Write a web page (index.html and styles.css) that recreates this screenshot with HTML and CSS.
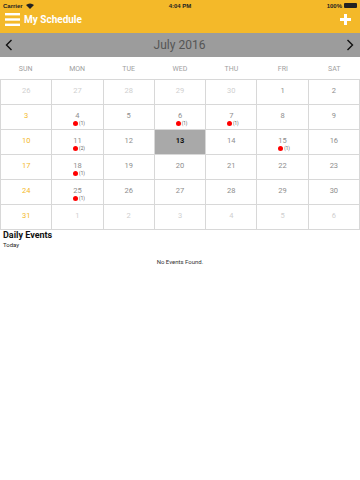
FILE: index.html
```html
<!DOCTYPE html>
<html>
<head>
  <title>My Schedule</title>
  <link rel="stylesheet" href="styles.css">
</head>
<body>
  <div class="status-bar">
    <div class="carrier">Carrier
      <svg width="8" height="6" viewBox="0 0 8 6"><path d="M4 6 L0 2 A6 6 0 0 1 8 2 Z" fill="#222"/></svg>
    </div>
    <div class="time">4:04 PM</div>
    <div class="battery">100% <span class="batt"></span></div>
  </div>

  <div class="nav-bar">
    <div class="nav-left">
      <svg class="menu-icon" width="15" height="13" viewBox="0 0 15 13">
        <rect x="0" y="0" width="15" height="2.4" fill="#fff"/>
        <rect x="0" y="5.3" width="15" height="2.4" fill="#fff"/>
        <rect x="0" y="10.6" width="15" height="2.4" fill="#fff"/>
      </svg>
      <span class="nav-title">My Schedule</span>
    </div>
    <svg class="plus-icon" width="11" height="11" viewBox="0 0 11 11">
      <rect x="4" y="0" width="3" height="11" fill="#fff"/>
      <rect x="0" y="4" width="11" height="3" fill="#fff"/>
    </svg>
  </div>

  <div class="month-bar">
    <svg width="8" height="12" viewBox="0 0 8 12"><path d="M6.5 1 L1.5 6 L6.5 11" fill="none" stroke="#111" stroke-width="1.4"/></svg>
    <span class="month-title">July 2016</span>
    <svg width="8" height="12" viewBox="0 0 8 12"><path d="M1.5 1 L6.5 6 L1.5 11" fill="none" stroke="#111" stroke-width="1.4"/></svg>
  </div>

  <div class="weekdays">
    <span>SUN</span><span>MON</span><span>TUE</span><span>WED</span><span>THU</span><span>FRI</span><span>SAT</span>
  </div>

  <div class="calendar" id="calendar"></div>

  <div class="daily">
    <div class="daily-title">Daily Events</div>
    <div class="daily-sub">Today</div>
    <div class="no-events">No Events Found.</div>
  </div>

  <script>
    // weeks of July 2016, [day, inMonth, eventCount]
    const weeks = [
      [[26,0],[27,0],[28,0],[29,0],[30,0],[1,1],[2,1]],
      [[3,1],[4,1,1],[5,1],[6,1,1],[7,1,1],[8,1],[9,1]],
      [[10,1],[11,1,2],[12,1],[13,1],[14,1],[15,1,1],[16,1]],
      [[17,1],[18,1,1],[19,1],[20,1],[21,1],[22,1],[23,1]],
      [[24,1],[25,1,1],[26,1],[27,1],[28,1],[29,1],[30,1]],
      [[31,1],[1,0],[2,0],[3,0],[4,0],[5,0],[6,0]]
    ];
    const cal = document.getElementById('calendar');
    weeks.forEach(week => {
      week.forEach((d, i) => {
        const cell = document.createElement('div');
        cell.className = 'cell';
        if (!d[1]) cell.classList.add('other');
        else if (i === 0) cell.classList.add('sunday');
        if (d[1] && d[0] === 13) cell.classList.add('today');
        let html = '<span class="num">' + d[0] + '</span>';
        if (d[2]) {
          html += '<span class="event"><span class="dot"></span>(' + d[2] + ')</span>';
        }
        cell.innerHTML = html;
        cal.appendChild(cell);
      });
    });
  </script>
</body>
</html>
```

FILE: styles.css
```css
body {
  margin: 0;
  font-family: Roboto, "Liberation Sans", sans-serif;
  background: #fff;
  width: 360px;
}
.status-bar {
  height: 11px;
  background: #f4b929;
  display: flex;
  align-items: center;
  justify-content: space-between;
  padding: 0 3px;
  font-family: "Liberation Sans", sans-serif;
  font-size: 6px;
  font-weight: bold;
  color: #222;
  position: relative;
}
.carrier {
  display: flex;
  align-items: center;
  gap: 3px;
}
.time {
  position: absolute;
  left: 0;
  right: 0;
  text-align: center;
}
.battery {
  display: flex;
  align-items: center;
  gap: 1px;
}
.batt {
  width: 13px;
  height: 5px;
  background: #222;
  border-radius: 1px;
  margin-left: 1px;
}
.nav-bar {
  height: 22px;
  background: #f4b929;
  display: flex;
  align-items: center;
  justify-content: space-between;
  padding: 0 9px 5px 5px;
  box-sizing: border-box;
}
.nav-left {
  display: flex;
  align-items: center;
  gap: 4px;
}
.nav-title {
  color: #fff;
  font-size: 10px;
  font-weight: bold;
}
.month-bar {
  height: 24px;
  background: #9c9c9c;
  display: flex;
  align-items: center;
  justify-content: space-between;
  padding: 0 6px 0 5px;
  border-bottom: 1px solid #fff;
}
.month-title {
  font-size: 12px;
  color: #555;
}
.weekdays {
  height: 21px;
  display: grid;
  grid-template-columns: repeat(7, 1fr);
  align-items: center;
  text-align: center;
  font-size: 7px;
  color: #a0a0a0;
}
.calendar {
  display: grid;
  grid-template-columns: repeat(7, 1fr);
  grid-auto-rows: 25px;
  border-top: 1px solid #d8d8d8;
  border-left: 1px solid #d8d8d8;
  box-sizing: border-box;
}
.cell {
  border-right: 1px solid #d8d8d8;
  border-bottom: 1px solid #d8d8d8;
  display: flex;
  flex-direction: column;
  align-items: center;
  font-size: 7.5px;
  color: #8e8e8e;
  padding-top: 6px;
  box-sizing: border-box;
}
.cell.other {
  color: #cfcfcf;
}
.cell.sunday {
  color: #f4b929;
}
.cell.today {
  background: #a9a9a9;
  color: #111;
  font-weight: bold;
}
.num {
  line-height: 9px;
}
.event {
  display: flex;
  align-items: center;
  gap: 1px;
  font-size: 4.5px;
  color: #555;
  margin-top: 1px;
  margin-left: 3px;
}
.dot {
  width: 5px;
  height: 5px;
  border-radius: 50%;
  background: #f00;
}
.daily {
  padding: 0 3px;
}
.daily-title {
  font-size: 9px;
  font-weight: bold;
  color: #111;
  line-height: 11px;
}
.daily-sub {
  font-size: 6px;
  color: #222;
  line-height: 8px;
}
.no-events {
  text-align: center;
  font-size: 6px;
  color: #333;
  margin-top: 9px;
}
```
